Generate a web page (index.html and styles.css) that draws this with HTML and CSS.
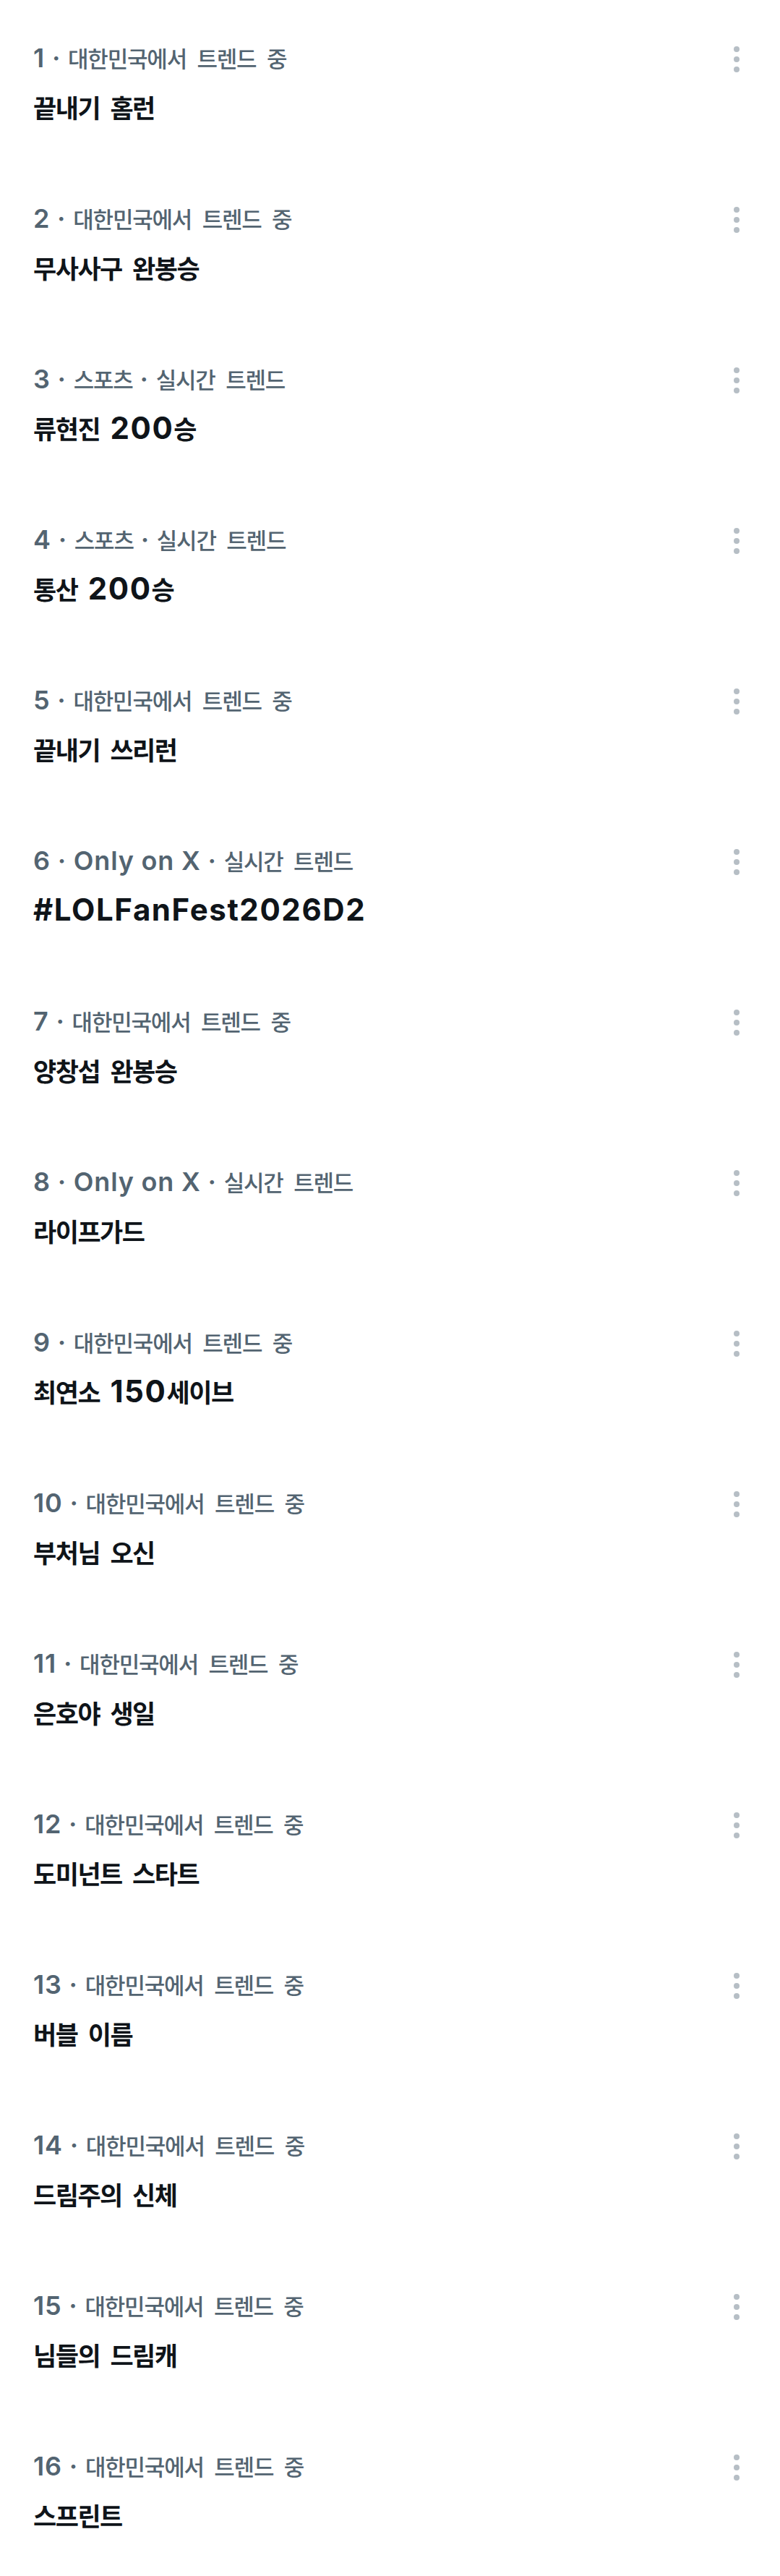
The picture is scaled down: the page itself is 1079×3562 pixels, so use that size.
FILE: index.html
```html
<!DOCTYPE html>
<html lang="ko">
<head>
<meta charset="utf-8">
<title>트렌드</title>
<link rel="stylesheet" href="styles.css">
</head>
<body>
<main class="trends">
  <div class="trend"><div class="text"><div class="meta"><span class="lat">1 · </span>대한민국에서 트렌드 중</div><div class="title">끝내기 홈런</div></div><div class="more"><svg viewBox="0 0 40 44" width="40" height="44"><circle cx="20" cy="10" r="4"/><circle cx="20" cy="24" r="4"/><circle cx="20" cy="38" r="4"/></svg></div></div>
  <div class="trend"><div class="text"><div class="meta"><span class="lat">2 · </span>대한민국에서 트렌드 중</div><div class="title">무사사구 완봉승</div></div><div class="more"><svg viewBox="0 0 40 44" width="40" height="44"><circle cx="20" cy="10" r="4"/><circle cx="20" cy="24" r="4"/><circle cx="20" cy="38" r="4"/></svg></div></div>
  <div class="trend"><div class="text"><div class="meta"><span class="lat">3 · </span>스포츠<span class="lat"> · </span>실시간 트렌드</div><div class="title">류현진 <span class="lat">200</span>승</div></div><div class="more"><svg viewBox="0 0 40 44" width="40" height="44"><circle cx="20" cy="10" r="4"/><circle cx="20" cy="24" r="4"/><circle cx="20" cy="38" r="4"/></svg></div></div>
  <div class="trend"><div class="text"><div class="meta"><span class="lat">4 · </span>스포츠<span class="lat"> · </span>실시간 트렌드</div><div class="title">통산 <span class="lat">200</span>승</div></div><div class="more"><svg viewBox="0 0 40 44" width="40" height="44"><circle cx="20" cy="10" r="4"/><circle cx="20" cy="24" r="4"/><circle cx="20" cy="38" r="4"/></svg></div></div>
  <div class="trend"><div class="text"><div class="meta"><span class="lat">5 · </span>대한민국에서 트렌드 중</div><div class="title">끝내기 쓰리런</div></div><div class="more"><svg viewBox="0 0 40 44" width="40" height="44"><circle cx="20" cy="10" r="4"/><circle cx="20" cy="24" r="4"/><circle cx="20" cy="38" r="4"/></svg></div></div>
  <div class="trend"><div class="text"><div class="meta"><span class="lat">6 · Only on X · </span>실시간 트렌드</div><div class="title"><span class="lat">#LOLFanFest2026D2</span></div></div><div class="more"><svg viewBox="0 0 40 44" width="40" height="44"><circle cx="20" cy="10" r="4"/><circle cx="20" cy="24" r="4"/><circle cx="20" cy="38" r="4"/></svg></div></div>
  <div class="trend"><div class="text"><div class="meta"><span class="lat">7 · </span>대한민국에서 트렌드 중</div><div class="title">양창섭 완봉승</div></div><div class="more"><svg viewBox="0 0 40 44" width="40" height="44"><circle cx="20" cy="10" r="4"/><circle cx="20" cy="24" r="4"/><circle cx="20" cy="38" r="4"/></svg></div></div>
  <div class="trend"><div class="text"><div class="meta"><span class="lat">8 · Only on X · </span>실시간 트렌드</div><div class="title">라이프가드</div></div><div class="more"><svg viewBox="0 0 40 44" width="40" height="44"><circle cx="20" cy="10" r="4"/><circle cx="20" cy="24" r="4"/><circle cx="20" cy="38" r="4"/></svg></div></div>
  <div class="trend"><div class="text"><div class="meta"><span class="lat">9 · </span>대한민국에서 트렌드 중</div><div class="title">최연소 <span class="lat">150</span>세이브</div></div><div class="more"><svg viewBox="0 0 40 44" width="40" height="44"><circle cx="20" cy="10" r="4"/><circle cx="20" cy="24" r="4"/><circle cx="20" cy="38" r="4"/></svg></div></div>
  <div class="trend"><div class="text"><div class="meta"><span class="lat">10 · </span>대한민국에서 트렌드 중</div><div class="title">부처님 오신</div></div><div class="more"><svg viewBox="0 0 40 44" width="40" height="44"><circle cx="20" cy="10" r="4"/><circle cx="20" cy="24" r="4"/><circle cx="20" cy="38" r="4"/></svg></div></div>
  <div class="trend"><div class="text"><div class="meta"><span class="lat">11 · </span>대한민국에서 트렌드 중</div><div class="title">은호야 생일</div></div><div class="more"><svg viewBox="0 0 40 44" width="40" height="44"><circle cx="20" cy="10" r="4"/><circle cx="20" cy="24" r="4"/><circle cx="20" cy="38" r="4"/></svg></div></div>
  <div class="trend"><div class="text"><div class="meta"><span class="lat">12 · </span>대한민국에서 트렌드 중</div><div class="title">도미넌트 스타트</div></div><div class="more"><svg viewBox="0 0 40 44" width="40" height="44"><circle cx="20" cy="10" r="4"/><circle cx="20" cy="24" r="4"/><circle cx="20" cy="38" r="4"/></svg></div></div>
  <div class="trend"><div class="text"><div class="meta"><span class="lat">13 · </span>대한민국에서 트렌드 중</div><div class="title">버블 이름</div></div><div class="more"><svg viewBox="0 0 40 44" width="40" height="44"><circle cx="20" cy="10" r="4"/><circle cx="20" cy="24" r="4"/><circle cx="20" cy="38" r="4"/></svg></div></div>
  <div class="trend"><div class="text"><div class="meta"><span class="lat">14 · </span>대한민국에서 트렌드 중</div><div class="title">드림주의 신체</div></div><div class="more"><svg viewBox="0 0 40 44" width="40" height="44"><circle cx="20" cy="10" r="4"/><circle cx="20" cy="24" r="4"/><circle cx="20" cy="38" r="4"/></svg></div></div>
  <div class="trend"><div class="text"><div class="meta"><span class="lat">15 · </span>대한민국에서 트렌드 중</div><div class="title">님들의 드림캐</div></div><div class="more"><svg viewBox="0 0 40 44" width="40" height="44"><circle cx="20" cy="10" r="4"/><circle cx="20" cy="24" r="4"/><circle cx="20" cy="38" r="4"/></svg></div></div>
  <div class="trend"><div class="text"><div class="meta"><span class="lat">16 · </span>대한민국에서 트렌드 중</div><div class="title">스프린트</div></div><div class="more"><svg viewBox="0 0 40 44" width="40" height="44"><circle cx="20" cy="10" r="4"/><circle cx="20" cy="24" r="4"/><circle cx="20" cy="38" r="4"/></svg></div></div>
</main>
</body>
</html>
```
FILE: styles.css
```css
html, body {
  margin: 0;
  padding: 0;
  background: #ffffff;
}

.trends {
  display: flex;
  flex-direction: column;
}

.trend {
  display: flex;
  justify-content: space-between;
  align-items: flex-start;
  height: 222px;
  box-sizing: border-box;
  padding: 58px 40px 0 46px;
}

.text {
  display: flex;
  flex-direction: column;
  gap: 18px;
}

.meta {
  height: 44px;
  line-height: 44px;
  white-space: nowrap;
  color: #536471;
  font-family: "Noto Sans CJK KR", "Noto Sans", sans-serif;
  font-size: 31px;
  font-weight: 500;
  letter-spacing: -1.2px;
  word-spacing: 7px;
}

.meta .lat {
  font-family: "Inter", "Noto Sans", sans-serif;
  font-size: 36px;
  font-weight: 600;
  letter-spacing: 0.8px;
  word-spacing: 0;
}

.title {
  height: 55px;
  line-height: 55px;
  white-space: nowrap;
  color: #0f1419;
  font-family: "Noto Sans CJK KR", "Noto Sans", sans-serif;
  font-size: 35px;
  font-weight: 700;
  letter-spacing: -1.5px;
  word-spacing: 6px;
}

.title .lat {
  font-family: "Inter", "Noto Sans", sans-serif;
  font-size: 42px;
  font-weight: 700;
  letter-spacing: 1.6px;
  word-spacing: 0;
}

.more {
  width: 40px;
  height: 44px;
}

.more svg {
  display: block;
  fill: #b6bec5;
}
```
